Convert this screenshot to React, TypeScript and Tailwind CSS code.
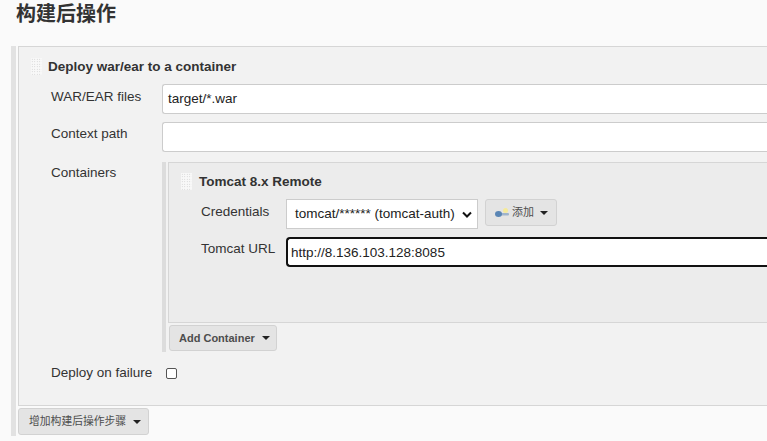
const font = "font-['Liberation_Sans','Noto_Sans_CJK_SC',sans-serif]";

const gripDots =
  "bg-[radial-gradient(#c9c9c9_0.6px,transparent_0.8px)] bg-[length:2.5px_2.5px] bg-[#f8f8f8]";

const Grip = ({ className }: { className: string }) => (
  <div className={`${gripDots} ${className}`} />
);

const Caret = () => (
  <span className="inline-block w-0 h-0 border-x-[4px] border-x-transparent border-t-[4px] border-t-[#222]" />
);

const Label = ({ children, className }: { children: string; className: string }) => (
  <div className={`text-[13.5px] leading-[18px] text-[#333] ${className}`}>{children}</div>
);

const TextBox = ({ value }: { value?: string }) => (
  <div className="flex-1 h-[30px] bg-white border-y-[1.5px] border-l-[1.5px] border-[#ccc] rounded-[3px] pl-[5px] text-[13.5px] leading-[27px] text-[#222]">
    {value}
  </div>
);

const GreyButton = ({ children, className }: { children: React.ReactNode; className: string }) => (
  <div className={`flex items-center bg-[#e4e4e4] border border-[#d2d2d2] rounded-[3px] font-bold text-[#4d4d4d] ${className}`}>
    {children}
  </div>
);

const KeyIcon = () => (
  <svg width="14" height="10" viewBox="0 0 14 10" className="mr-[3px]">
    <rect x="4" y="5" width="10" height="2.5" rx="1" fill="#9fb4cc" />
    <ellipse cx="3.5" cy="6" rx="3.5" ry="3" fill="#5a86b5" />
    <circle cx="10.5" cy="2.5" r="2.5" fill="#f5ea9a" />
  </svg>
);

export default function App() {
  return (
    <div className={`w-[767px] h-[441px] overflow-hidden bg-[#fafafa] ${font}`}>
      <div className="w-[900px]">
        <h1 className="h-[46px] pl-[16px] pt-[2px] text-[20px] leading-[24px] font-bold text-[#333]">
          构建后操作
        </h1>
        <div className="ml-[11px] h-[390px] border-l-[5px] border-[#e2e2e2] pl-[2px] flex flex-col">
          <div className="h-[360px] bg-[#f2f2f2] border-y-[1.5px] border-l border-[#d6d6d6] flex flex-col">
            <div className="flex items-center h-[37px] pt-[2px]">
              <Grip className="ml-[12px] w-[11px] h-[17px]" />
              <div className="ml-[6px] pt-[2px] text-[13.5px] font-bold text-[#333]">Deploy war/ear to a container</div>
            </div>
            <div className="flex h-[38px] pl-[32px]">
              <Label className="w-[111px] pt-[4px]">WAR/EAR files</Label>
              <TextBox value="target/*.war" />
            </div>
            <div className="flex h-[40px] pl-[32px]">
              <Label className="w-[111px] pt-[3px]">Context path</Label>
              <TextBox />
            </div>
            <div className="flex pl-[32px]">
              <Label className="w-[111px] pt-[2px]">Containers</Label>
              <div className="flex-1 h-[190px] border-l-[4px] border-[#dcdcdc] pl-[2px] flex flex-col">
                <div className="h-[161px] bg-[#ececec] border-y-[1.5px] border-l border-[#d6d6d6] flex flex-col">
                  <div className="flex items-center h-[36px]">
                    <Grip className="ml-[12px] w-[11px] h-[17px]" />
                    <div className="ml-[7px] pt-[2px] text-[13.5px] font-bold text-[#333]">Tomcat 8.x Remote</div>
                  </div>
                  <div className="flex h-[38px] pl-[32px]">
                    <Label className="w-[85px] pt-[4px]">Credentials</Label>
                    <div className="flex items-center justify-between w-[192px] h-[30px] bg-white border border-[#ccc] pl-[8px] pr-[5px] text-[13.5px] text-[#222] whitespace-nowrap">
                      tomcat/****** (tomcat-auth)
                      <svg width="10" height="7" viewBox="0 0 10 7">
                        <path d="M1 1.5 L5 5.5 L9 1.5" fill="none" stroke="#111" strokeWidth="2" />
                      </svg>
                    </div>
                    <GreyButton className="ml-[7px] w-[72px] h-[27px] pl-[9px] gap-[6px] text-[11px] font-normal">
                      <span className="flex items-center">
                        <KeyIcon />
                        添加
                      </span>
                      <Caret />
                    </GreyButton>
                  </div>
                  <div className="flex h-[30px] pl-[32px]">
                    <Label className="w-[85px] pt-[3px]">Tomcat URL</Label>
                    <div className="flex-1 h-[30px] bg-white border-y-2 border-l-2 border-[#111] rounded-[4px] pl-[3px] text-[13.5px] leading-[27px] text-[#222]">
                      http://8.136.103.128:8085
                    </div>
                  </div>
                </div>
                <GreyButton className="ml-[1px] mt-[2px] w-[108px] h-[26px] pl-[9px] gap-[7px] text-[11px]">
                  Add Container
                  <Caret />
                </GreyButton>
              </div>
            </div>
            <div className="flex items-center h-[42px] pl-[32px]">
              <Label className="w-[115px]">Deploy on failure</Label>
              <div className="w-[11px] h-[11px] bg-white border border-[#555] rounded-[2px]" />
            </div>
          </div>
          <GreyButton className="mt-[2px] w-[131px] h-[27px] pl-[10px] gap-[7px] text-[10.8px] font-normal">
            增加构建后操作步骤
            <Caret />
          </GreyButton>
        </div>
      </div>
    </div>
  );
}
